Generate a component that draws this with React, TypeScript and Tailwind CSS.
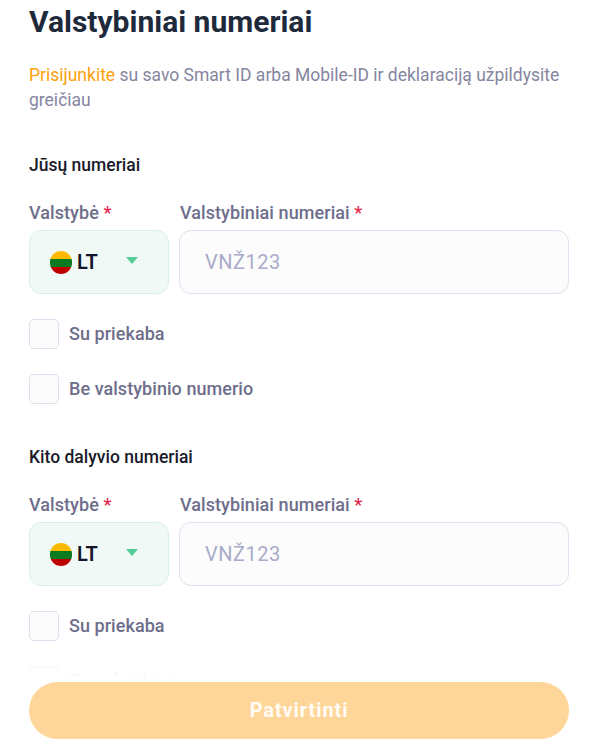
import type { ReactNode } from 'react';

const font = { fontFamily: 'Roboto, sans-serif' };

function Flag() {
  return (
    <span className="flex w-[22px] h-[23px] flex-col overflow-hidden rounded-full shrink-0">
      <span className="h-[8px] bg-[#fdb900]" />
      <span className="h-[8px] bg-[#0a7a20]" />
      <span className="h-[7px] bg-[#bf0000]" />
    </span>
  );
}

function Label({ children }: { children: ReactNode }) {
  return (
    <label className="block h-[21px] text-[18px] leading-[21px] font-medium tracking-[0.07px] text-[#6e6e8c]">
      {children} <span className="text-[#e5274d]">*</span>
    </label>
  );
}

function Check({ label }: { label: string }) {
  return (
    <label className="flex items-center gap-[10px]">
      <span className="w-[30px] h-[30px] rounded-[5px] border border-[#e0deef] bg-[#fcfcfd] shrink-0" />
      <span className="text-[18px] leading-[30px] font-medium tracking-[0.05px] text-[#6e6e8c]">{label}</span>
    </label>
  );
}

function Plates({ title }: { title: string }) {
  return (
    <section>
      <h2 className="text-[17.5px] leading-[22px] font-medium text-[#1a1a2b]">{title}</h2>
      <div className="mt-[26px] flex gap-[10px]">
        <div className="w-[140px] shrink-0">
          <Label>Valstybė</Label>
          <button className="mt-[7px] flex h-[64px] w-full items-center rounded-[12px] border border-[#d9f1e6] bg-[#f0f9f5] pl-[20px]">
            <Flag />
            <span className="ml-[5px] -mt-[1px] text-[20px] font-semibold text-[#14142b]">LT</span>
            <svg className="ml-[28px] -mt-[3px]" width="12" height="7" viewBox="0 0 12 7">
              <path d="M0 0h12L6 7z" fill="#52cc96" />
            </svg>
          </button>
        </div>
        <div className="flex-1">
          <div className="pl-px">
            <Label>Valstybiniai numeriai</Label>
          </div>
          <input
            placeholder="VNŽ123"
            className="mt-[7px] h-[64px] w-full rounded-[12px] border border-[#e0deef] bg-[#fcfcfd] px-[25px] text-[20px] tracking-[0.5px] outline-none placeholder:text-[#a9abc9]"
          />
        </div>
      </div>
      <div className="mt-[25px] flex flex-col gap-[25px]">
        <Check label="Su priekaba" />
        <Check label="Be valstybinio numerio" />
      </div>
    </section>
  );
}

export default function App() {
  return (
    <div className="relative h-[745px] overflow-hidden bg-white pl-[29px] pr-[28px]" style={font}>
      <h1 className="mt-[5px] text-[30px] leading-[34px] font-bold text-[#1e2a3b]">Valstybiniai numeriai</h1>
      <p className="mt-[24px] text-[17.5px] leading-[25px] text-[#85859f]">
        <span className="text-[#ffa00a]">Prisijunkite</span> su savo Smart ID arba Mobile-ID ir deklaraciją užpildysite greičiau
      </p>
      <div className="mt-[41px] flex flex-col gap-[42px]">
        <Plates title="Jūsų numeriai" />
        <Plates title="Kito dalyvio numeriai" />
      </div>

      {/* sticky submit, fades the form out behind it */}
      <div className="absolute inset-x-0 bottom-0 h-[80px] bg-gradient-to-b from-white/70 to-white to-[15%] pl-[29px] pr-[28px] pt-[17px]">
        <button className="h-[57px] w-full rounded-[29px] bg-[#ffd699] pb-[2px] text-[20px] font-bold tracking-[0.9px] text-white/90">
          Patvirtinti
        </button>
      </div>
    </div>
  );
}
